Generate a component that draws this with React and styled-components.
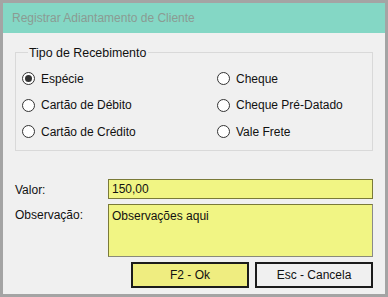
import styled, { createGlobalStyle } from "styled-components";

const GlobalStyle = createGlobalStyle`
  html, body {
    margin: 0;
    padding: 0;
  }
  * {
    box-sizing: border-box;
  }
`;

const tipos = [
  { id: "especie", label: "Espécie" },
  { id: "cheque", label: "Cheque" },
  { id: "debito", label: "Cartão de Débito" },
  { id: "predatado", label: "Cheque Pré-Datado" },
  { id: "credito", label: "Cartão de Crédito" },
  { id: "frete", label: "Vale Frete" },
];

const App = () => {
  const selected = "especie";

  return (
    <>
      <GlobalStyle />
      <Screen>
        <Window>
          <TitleBar>Registrar Adiantamento de Cliente</TitleBar>
          <Body>
            <GroupBox>
              <Legend>Tipo de Recebimento</Legend>
              <RadioGrid>
                {tipos.map((t) => (
                  <RadioItem key={t.id}>
                    <RadioCircle checked={t.id === selected} />
                    <span>{t.label}</span>
                  </RadioItem>
                ))}
              </RadioGrid>
            </GroupBox>
            <Form>
              <Label>Valor:</Label>
              <ValueInput readOnly value="150,00" />
              <Label>Observação:</Label>
              <NotesInput readOnly value="Observações aqui" />
            </Form>
            <ButtonRow>
              <Button primary>F2 - Ok</Button>
              <Button>Esc - Cancela</Button>
            </ButtonRow>
          </Body>
        </Window>
      </Screen>
    </>
  );
};
export default App;

const Screen = styled.div`
  width: 388px;
  height: 297px;
  padding: 3px 3px 3px 3px;
  background-color: #a4a4a4;
  font-family: "Liberation Sans", Arial, sans-serif;
  color: #111;
`;
const Window = styled.div`
  height: 100%;
  display: flex;
  flex-direction: column;
  background-color: #f0f0f0;
`;
const TitleBar = styled.div`
  height: 30px;
  display: flex;
  align-items: center;
  padding-left: 9px;
  padding-top: 1px;
  background-color: #84d7c5;
  color: #8b9b93;
  font-size: 12px;
`;
const Body = styled.div`
  flex: 1;
  display: flex;
  flex-direction: column;
  padding: 13px 12px 6px 12px;
`;
const GroupBox = styled.fieldset`
  margin: 0;
  padding: 6px 0 5px 6px;
  border: 1px solid #d9d9d9;
  min-width: 0;
`;
const Legend = styled.legend`
  margin-left: 6px;
  padding: 0 2px 0 1px;
  font-size: 12.4px;
  line-height: 14px;
`;
const RadioGrid = styled.div`
  display: grid;
  grid-template-columns: 195px 1fr;
  grid-auto-rows: 26.5px;
`;
const RadioItem = styled.label`
  display: flex;
  align-items: center;
  gap: 6px;
  font-size: 12px;
`;
const RadioCircle = styled.span`
  width: 13px;
  height: 13px;
  border-radius: 50%;
  border: 1px solid #333;
  background-color: #fff;
  display: flex;
  align-items: center;
  justify-content: center;
  &::after {
    content: "";
    width: 7px;
    height: 7px;
    border-radius: 50%;
    background-color: #333;
    display: ${(p) => (p.checked ? "block" : "none")};
  }
`;
const Form = styled.div`
  margin-top: 28px;
  display: grid;
  grid-template-columns: 93px 1fr;
  grid-template-rows: 20px 53px;
  row-gap: 5px;
`;
const Label = styled.div`
  font-size: 12px;
  padding-top: 4px;
`;
const fieldStyles = `
  width: 100%;
  height: 100%;
  margin: 0;
  border: 1px solid #7a7a38;
  background-color: #f1f584;
  font-family: "Liberation Sans", Arial, sans-serif;
  font-size: 12px;
  color: #111;
  padding: 0 3px;
  outline: none;
`;
const ValueInput = styled.input`
  ${fieldStyles}
`;
const NotesInput = styled.textarea`
  ${fieldStyles}
  padding-top: 4px;
  resize: none;
  border-right-color: #8a8a8a;
  border-bottom-color: #8a8a7a;
`;
const ButtonRow = styled.div`
  margin-top: 5px;
  display: flex;
  justify-content: flex-end;
  gap: 6px;
`;
const Button = styled.button`
  width: 118px;
  height: 26px;
  border: 2px solid #1b1b1b;
  background-color: ${(p) => (p.primary ? "#efed80" : "#f0f0f0")};
  font-family: "Liberation Sans", Arial, sans-serif;
  font-size: 12px;
  color: #111;
  padding: 0;
`;
